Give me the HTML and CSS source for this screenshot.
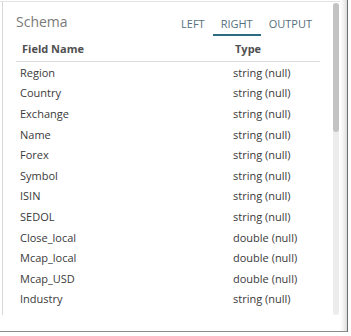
FILE: index.html
```html
<!DOCTYPE html>
<html lang="en">
<head>
  <meta charset="UTF-8">
  <meta name="viewport" content="width=device-width, initial-scale=1.0">
  <title>Schema</title>
  <link rel="stylesheet" href="styles.css">
</head>
<body>
  <div class="dialog">
    <div class="pane">
      <div class="pane_body">
        <div class="pane_head">
          <span class="title">Schema</span>
          <ul class="tabs">
            <li>LEFT</li>
            <li class="active">RIGHT</li>
            <li>OUTPUT</li>
          </ul>
        </div>
        <div class="schema">
          <div class="row head">
            <span>Field Name</span>
            <span>Type</span>
          </div>
          <div class="row"><span>Region</span><span>string (null)</span></div>
          <div class="row"><span>Country</span><span>string (null)</span></div>
          <div class="row"><span>Exchange</span><span>string (null)</span></div>
          <div class="row"><span>Name</span><span>string (null)</span></div>
          <div class="row"><span>Forex</span><span>string (null)</span></div>
          <div class="row"><span>Symbol</span><span>string (null)</span></div>
          <div class="row"><span>ISIN</span><span>string (null)</span></div>
          <div class="row"><span>SEDOL</span><span>string (null)</span></div>
          <div class="row"><span>Close_local</span><span>double (null)</span></div>
          <div class="row"><span>Mcap_local</span><span>double (null)</span></div>
          <div class="row"><span>Mcap_USD</span><span>double (null)</span></div>
          <div class="row"><span>Industry</span><span>string (null)</span></div>
        </div>
      </div>
      <div class="scrollbar">
        <div class="thumb"></div>
      </div>
    </div>
    <div class="gutter"></div>
  </div>
</body>
</html>
```

FILE: styles.css
```css
*{
  margin: 0;
  padding: 0;
  box-sizing: border-box;
}
body{
  background: #fff;
  font-family: "Open Sans", "Noto Sans", sans-serif;
}
.dialog{
  width: 348px;
  height: 332px;
  display: flex;
  flex-flow: row nowrap;
  align-items: flex-start;
  border-right: 1px solid #6e6e6e;
  border-bottom: 1px solid #8c8c8c;
}
.pane{
  width: 340px;
  height: 315px;
  margin-top: 1px;
  border-top: 1px solid #e3e3e3;
  display: flex;
  flex-flow: row nowrap;
}
.pane_body{
  flex: 1;
  height: 313px;
  margin-left: 2px;
  border-left: 1px solid #d8d8d8;
  padding: 0 13px;
  overflow: hidden;
}
.pane_head{
  display: flex;
  justify-content: space-between;
  align-items: flex-end;
}
.title{
  font-size: 14px;
  line-height: 18px;
  color: #7a7a7a;
  padding-bottom: 5px;
}
.tabs{
  list-style-type: none;
  display: flex;
  flex-flow: row nowrap;
}
.tabs li{
  font-size: 11px;
  line-height: 14px;
  color: #56707e;
  padding: 15px 8px 3px;
  border-bottom: 2px solid transparent;
}
.tabs li.active{
  border-bottom-color: #2d6b82;
}
.row{
  display: grid;
  grid-template-columns: 213px 1fr;
  height: 20.6px;
  align-items: center;
  font-size: 11px;
  color: #3a3a3a;
}
.row span{
  padding-left: 4px;
}
.row.head{
  height: 26px;
  font-weight: bold;
  color: #505050;
  border-bottom: 1px solid #dedede;
}
.row.head span{
  padding-left: 6px;
}
.scrollbar{
  width: 6px;
  margin: 1px 1px 0 0;
  height: 312px;
  background: #ececec;
  border-radius: 3px;
}
.thumb{
  height: 129px;
  background: #c3c3c3;
  border-radius: 3px;
}
.gutter{
  flex: 1;
  height: 331px;
  background: linear-gradient(to right, #fff, #f2f2f2 50%, #dadada);
}
```
